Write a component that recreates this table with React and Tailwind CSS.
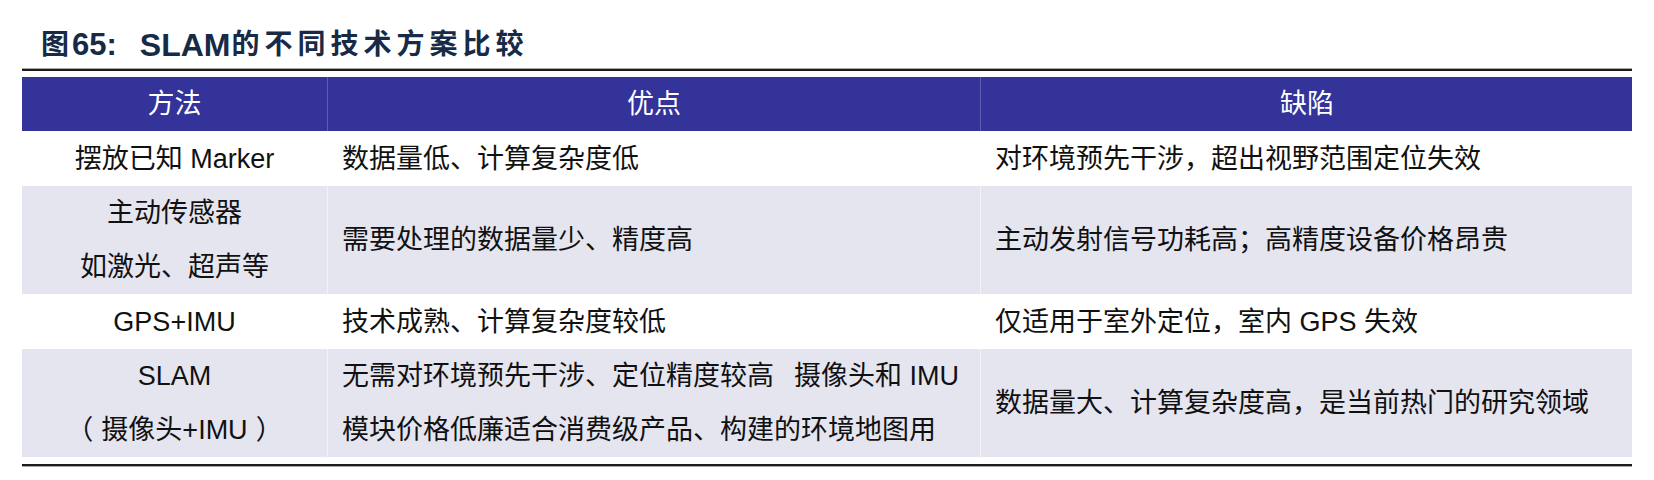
import React from 'react';

const rows = [
  {
    method: ['摆放已知 Marker'],
    pros: ['数据量低、计算复杂度低'],
    cons: '对环境预先干涉，超出视野范围定位失效',
    shaded: false,
  },
  {
    method: ['主动传感器', '如激光、超声等'],
    pros: ['需要处理的数据量少、精度高'],
    cons: '主动发射信号功耗高；高精度设备价格昂贵',
    shaded: true,
  },
  {
    method: ['GPS+IMU'],
    pros: ['技术成熟、计算复杂度较低'],
    cons: '仅适用于室外定位，室内 GPS 失效',
    shaded: false,
  },
  {
    method: [
      'SLAM',
      <>（<span className="inline-block w-[8px]" />摄像头+IMU<span className="inline-block w-[8px]" />）</>,
    ],
    pros: [
      <>无需对环境预先干涉、定位精度较高<span className="inline-block w-[20px]" />摄像头和 IMU</>,
      '模块价格低廉适合消费级产品、构建的环境地图用',
    ],
    cons: '数据量大、计算复杂度高，是当前热门的研究领域',
    shaded: true,
  },
];

const App = () => {
  return (
    <div
      className="w-[1654px] h-[480px] bg-white text-[#111]"
      style={{ fontFamily: '"Liberation Sans", "Noto Sans CJK SC", sans-serif' }}
    >
      {/* title */}
      <div className="h-[68px] pt-[22px] pl-[41px] flex items-center text-[#172a46]">
        <span className="text-[28px] font-semibold">图</span>
        <span className="ml-[3px] text-[31px] font-bold">65:</span>
        <span className="ml-[23px] text-[32px] font-bold">SLAM</span>
        <span className="ml-[1px] text-[28px] font-semibold tracking-[5px]">的不同技术方案比较</span>
      </div>
      <div className="mx-[22px] h-[1px] bg-[#a8a8a8]" />
      <div className="mx-[22px] h-[2px] bg-[#1c1c1c]" />

      {/* table */}
      <div className="mx-[22px] mt-[6px] text-[27px]">
        <div className="grid grid-cols-[305px_653px_653px] h-[54px] bg-[#333399] text-white">
          <div className="flex items-center justify-center">方法</div>
          <div className="flex items-center justify-center border-l border-[#5b5dad]">优点</div>
          <div className="flex items-center justify-center border-l border-[#5b5dad]">缺陷</div>
        </div>

        {rows.map((row, i) => {
          const tall = row.method.length > 1 || row.pros.length > 1;
          return (
            <div
              key={i}
              className={`grid grid-cols-[305px_653px_653px] leading-[54px] ${
                tall ? 'h-[108px]' : 'h-[55px]'
              } ${row.shaded ? 'bg-[#e5e5f0]' : 'bg-white'}`}
            >
              <div className="flex flex-col items-center justify-center text-center">
                {row.method.map((m, j) => (
                  <div key={j} className="whitespace-nowrap">{m}</div>
                ))}
              </div>
              <div
                className={`flex flex-col justify-center pl-[14px] border-l ${
                  row.shaded ? 'border-[#f2f2f8]' : 'border-white'
                }`}
              >
                {row.pros.map((p, j) => (
                  <div key={j} className="whitespace-nowrap">{p}</div>
                ))}
              </div>
              <div
                className={`flex flex-col justify-center pl-[14px] border-l ${
                  row.shaded ? 'border-[#f2f2f8]' : 'border-white'
                }`}
              >
                <div className="whitespace-nowrap">{row.cons}</div>
              </div>
            </div>
          );
        })}
      </div>

      <div className="mx-[22px] mt-[7px] h-[2px] bg-[#1c1c1c]" />
      <div className="mx-[22px] h-[1px] bg-[#a8a8a8]" />
    </div>
  );
};

export default App;
